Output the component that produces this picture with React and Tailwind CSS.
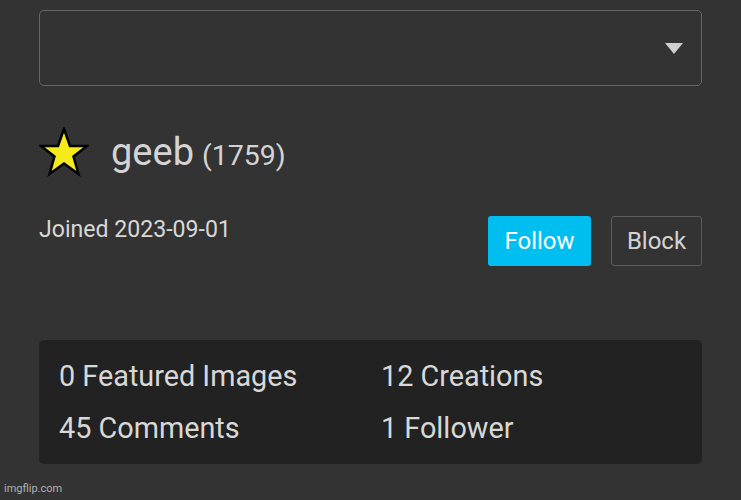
function Star() {
  return (
    <svg width="50" height="50" viewBox="0 0 50 50" className="shrink-0">
      <polygon
        points="25,2 31,19 48,19 34.5,29.5 39.5,47 25,36.5 10.5,47 15.5,29.5 2,19 19,19"
        fill="#f7ea1a"
        stroke="#000"
        strokeWidth="2.5"
        strokeLinejoin="miter"
      />
    </svg>
  );
}

function StatsBox({ stats }) {
  return (
    <div className="grid grid-cols-[322px_1fr] rounded-[5px] bg-[#222222] px-5 py-[10px]">
      {stats.map((s) => (
        <div key={s} className="text-[28.8px] leading-[52px] text-[#d8d8d8]">
          {s}
        </div>
      ))}
    </div>
  );
}

export default function App() {
  return (
    <div
      className="relative min-h-[500px] bg-[#333333] px-[39px] pt-[10px]"
      style={{ fontFamily: "Roboto, 'Noto Sans', sans-serif" }}
    >
      <div className="flex h-[76px] items-center justify-end rounded-[5px] border border-[#666666] pr-[18px]">
        <svg width="18" height="11" viewBox="0 0 18 11">
          <polygon points="0,0 18,0 9,11" fill="#cfcfcf" />
        </svg>
      </div>

      <div className="mt-[41px] flex items-center gap-[22px]">
        <Star />
        <div className="flex items-baseline gap-[8px] text-[#d4d4d4]">
          <span className="text-[38px] leading-none">geeb</span>
          <span className="text-[28.5px] leading-none">(1759)</span>
        </div>
      </div>

      <div className="mt-[39px] flex items-start justify-between">
        <div className="text-[23.1px] leading-[28px] text-[#d8d8d8]">Joined 2023-09-01</div>
        <div className="flex gap-5">
          <button className="h-[50px] w-[103px] rounded-[3px] bg-[#00bff0] text-[24px] text-white">
            Follow
          </button>
          <button className="h-[50px] w-[91px] rounded-[3px] border border-[#5c5c5c] text-[24px] text-[#d4d4d4]">
            Block
          </button>
        </div>
      </div>

      <div className="mt-[74px]">
        <StatsBox stats={["0 Featured Images", "12 Creations", "45 Comments", "1 Follower"]} />
      </div>

      <div className="absolute bottom-[3px] left-[4px] text-[11px] text-[#b0b0b0]">imgflip.com</div>
    </div>
  );
}
